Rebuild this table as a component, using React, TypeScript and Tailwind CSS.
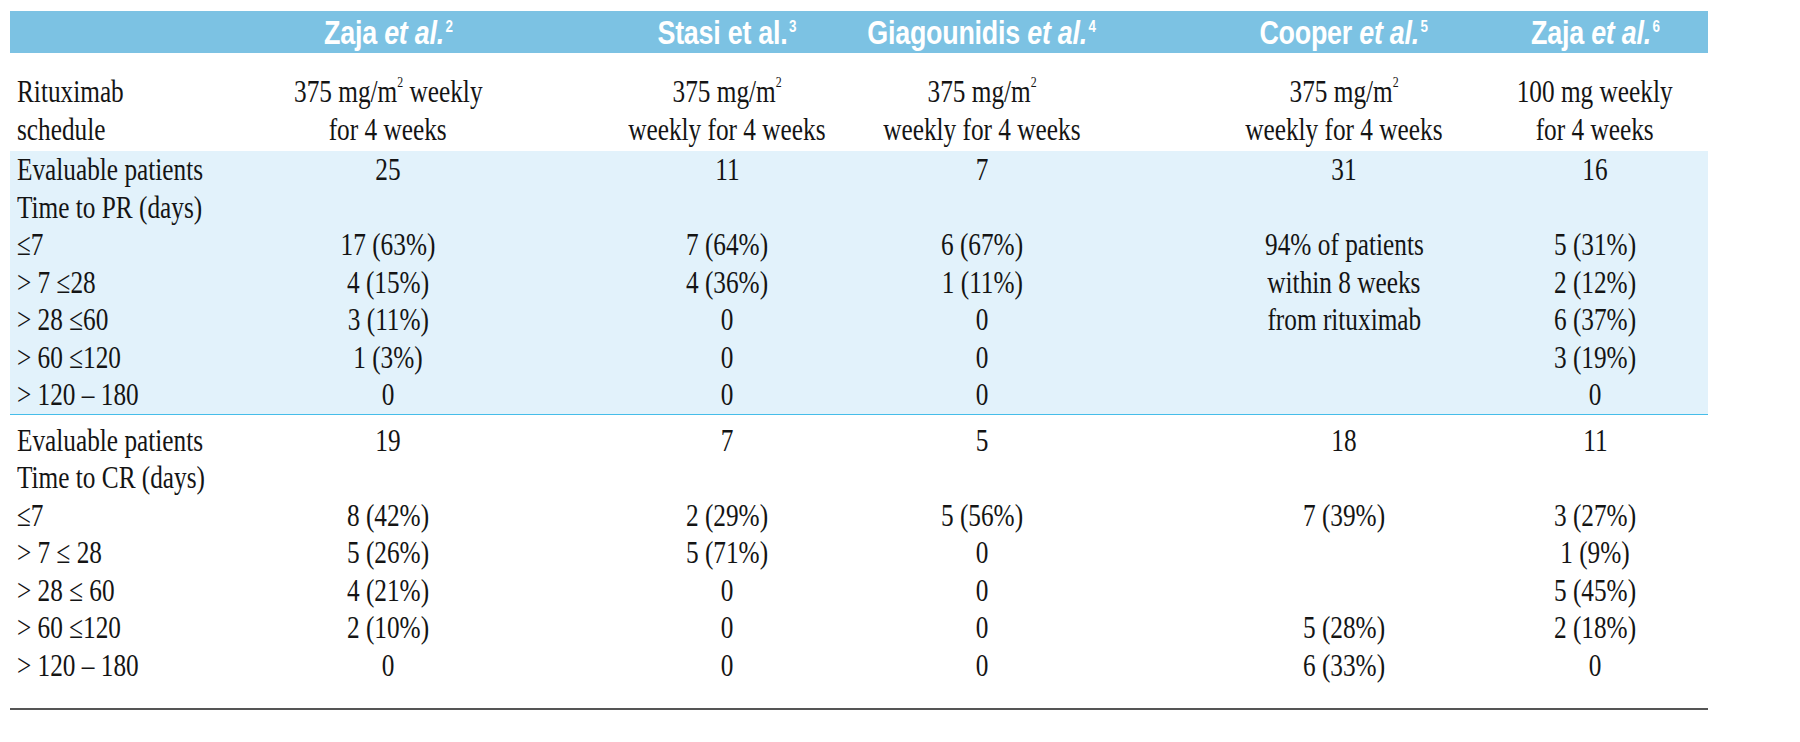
const serif = "font-['Liberation_Serif','Times_New_Roman',serif]";
const sans = "font-['Liberation_Sans_Narrow','Liberation_Sans',Arial,sans-serif]";

const colPad = ['pr-[4px]', 'pl-[57px]', 'pr-[46px]', 'pl-[55px]', 'pl-[12px]'];

const gridCols = 'grid grid-cols-[220px_320px_297px_316px_307px_238px]';

const studies: { name: string; italic: boolean; ref: string }[] = [
  { name: 'Zaja', italic: true, ref: '2' },
  { name: 'Stasi', italic: false, ref: '3' },
  { name: 'Giagounidis', italic: true, ref: '4' },
  { name: 'Cooper', italic: true, ref: '5' },
  { name: 'Zaja', italic: true, ref: '6' },
];

const prRows: string[][] = [
  ['Evaluable patients', '25', '11', '7', '31', '16'],
  ['Time to PR (days)', '', '', '', '', ''],
  ['≤7', '17 (63%)', '7 (64%)', '6 (67%)', '94% of patients', '5 (31%)'],
  ['> 7 ≤28', '4 (15%)', '4 (36%)', '1 (11%)', 'within 8 weeks', '2 (12%)'],
  ['> 28 ≤60', '3 (11%)', '0', '0', 'from rituximab', '6 (37%)'],
  ['> 60 ≤120', '1 (3%)', '0', '0', '', '3 (19%)'],
  ['> 120 – 180', '0', '0', '0', '', '0'],
];

const crRows: string[][] = [
  ['Evaluable patients', '19', '7', '5', '18', '11'],
  ['Time to CR (days)', '', '', '', '', ''],
  ['≤7', '8 (42%)', '2 (29%)', '5 (56%)', '7 (39%)', '3 (27%)'],
  ['> 7 ≤ 28', '5 (26%)', '5 (71%)', '0', '', '1 (9%)'],
  ['> 28 ≤ 60', '4 (21%)', '0', '0', '', '5 (45%)'],
  ['> 60 ≤120', '2 (10%)', '0', '0', '5 (28%)', '2 (18%)'],
  ['> 120 – 180', '0', '0', '0', '6 (33%)', '0'],
];

function Sup({ children }: { children: string }) {
  return <sup className="relative -top-[3px] text-[15px] leading-none align-super">{children}</sup>;
}

// the print face is a condensed serif; squeeze Liberation Serif to the same set width
function Cond({ children, left }: { children: React.ReactNode; left?: boolean }) {
  return (
    <span
      className={`inline-block whitespace-nowrap scale-x-[0.79] ${left ? 'origin-left' : 'origin-center'}`}
    >
      {children}
    </span>
  );
}

function DataRow({ cells }: { cells: string[] }) {
  return (
    <div className={`${gridCols} h-[37.5px] items-center`}>
      <div className="pl-[7px]">
        <Cond left>{cells[0]}</Cond>
      </div>
      {cells.slice(1).map((c, i) => (
        <div key={i} className={`flex justify-center ${colPad[i]}`}>
          {c && <Cond>{c}</Cond>}
        </div>
      ))}
    </div>
  );
}

export default function App() {
  return (
    <div className="w-[1800px] h-[742px] bg-white pt-[11px] pl-[10px] overflow-hidden">
      <div className={`w-[1698px] text-[32px] leading-[37.5px] text-[#141414] ${serif}`}>
        {/* header bar */}
        <div className={`${gridCols} h-[42px] items-center bg-[#7cc2e3] text-white font-bold text-[34px] ${sans}`}>
          <div />
          {studies.map((s, i) => (
            <div key={i} className={`flex justify-center ${colPad[i]}`}>
              <span className="inline-block whitespace-nowrap leading-none scale-x-[0.79] tracking-[-0.3px]">
                {s.name} {s.italic ? <i>et al.</i> : 'et al.'}
                <sup className="relative top-[3px] ml-[2px] text-[17px] leading-none align-top">{s.ref}</sup>
              </span>
            </div>
          ))}
        </div>

        {/* schedule */}
        <div className={`${gridCols} pt-[20px] pb-[3px]`}>
          <div className="pl-[7px] flex flex-col">
            <Cond left>Rituximab</Cond>
            <Cond left>schedule</Cond>
          </div>
          <div className={`flex flex-col items-center ${colPad[0]}`}>
            <Cond>
              375 mg/m<Sup>2</Sup> weekly
            </Cond>
            <Cond>for 4 weeks</Cond>
          </div>
          {[1, 2, 3].map((i) => (
            <div key={i} className={`flex flex-col items-center ${colPad[i]}`}>
              <Cond>
                375 mg/m<Sup>2</Sup>
              </Cond>
              <Cond>weekly for 4 weeks</Cond>
            </div>
          ))}
          <div className={`flex flex-col items-center ${colPad[4]}`}>
            <Cond>100 mg weekly</Cond>
            <Cond>for 4 weeks</Cond>
          </div>
        </div>

        {/* partial response */}
        <div className="bg-[#e2f2fb] border-b border-[#45bde9]">
          {prRows.map((r, i) => (
            <DataRow key={i} cells={r} />
          ))}
        </div>

        {/* complete response */}
        <div className="pt-[7px] pb-[24px] border-b-2 border-[#555555]">
          {crRows.map((r, i) => (
            <DataRow key={i} cells={r} />
          ))}
        </div>
      </div>
    </div>
  );
}
